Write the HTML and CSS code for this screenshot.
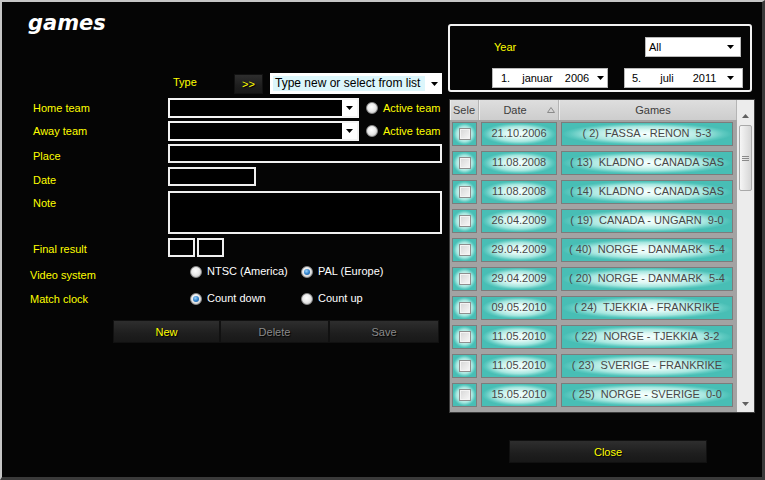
FILE: index.html
```html
<!DOCTYPE html>
<html>
<head>
<meta charset="utf-8">
<link rel="stylesheet" href="styles.css">
</head>
<body>
<div class="win">
  <div class="left">
    <h1 class="title">games</h1>

    <div class="row r-type">
      <span class="lbl lbl-type">Type</span>
      <span class="darkbtn go">&gt;&gt;</span>
      <span class="typecombo"><span class="typetext">Type new or select from list</span><svg class="arr" width="7" height="4" viewBox="0 0 7 4"><path d="M0 0h7L3.5 4z"/></svg></span>
    </div>

    <div class="row r-home">
      <span class="lbl pt4">Home team</span>
      <span class="dcombo"><span class="dfill"></span><span class="darr"><svg width="7" height="4" viewBox="0 0 7 4"><path d="M0 0h7L3.5 4z"/></svg></span></span>
      <span class="radio r-act"></span><span class="ylw">Active team</span>
    </div>

    <div class="row r-away">
      <span class="lbl pt4">Away team</span>
      <span class="dcombo"><span class="dfill"></span><span class="darr"><svg width="7" height="4" viewBox="0 0 7 4"><path d="M0 0h7L3.5 4z"/></svg></span></span>
      <span class="radio r-act"></span><span class="ylw">Active team</span>
    </div>

    <div class="row r-place">
      <span class="lbl pt6">Place</span>
      <span class="tbox w-full h19"></span>
    </div>

    <div class="row r-date">
      <span class="lbl pt7">Date</span>
      <span class="tbox w-date h19"></span>
    </div>

    <div class="row r-note">
      <span class="lbl pt6">Note</span>
      <span class="tbox w-full h43"></span>
    </div>

    <div class="row r-final">
      <span class="lbl pt5">Final result</span>
      <span class="tbox w-res h19"></span>
      <span class="tbox w-res h19 res2"></span>
    </div>

    <div class="row r-video">
      <span class="lbl lbl-wide pt5">Video system</span>
      <span class="ritem first"><span class="radio"></span><span class="wht">NTSC (America)</span></span>
      <span class="ritem"><span class="radio on"></span><span class="wht">PAL (Europe)</span></span>
    </div>

    <div class="row r-match">
      <span class="lbl lbl-wide pt2">Match clock</span>
      <span class="ritem first"><span class="radio on"></span><span class="wht">Count down</span></span>
      <span class="ritem"><span class="radio"></span><span class="wht">Count up</span></span>
    </div>

    <div class="row r-btns">
      <span class="darkbtn bb b-new">New</span>
      <span class="darkbtn bb b-del dis">Delete</span>
      <span class="darkbtn bb b-save dis">Save</span>
    </div>
  </div>

  <div class="right">
    <div class="yearbox">
      <div class="yrow1">
        <span class="ylw yearlbl">Year</span>
        <span class="wcombo allc"><span>All</span><svg width="7" height="4" viewBox="0 0 7 4"><path d="M0 0h7L3.5 4z"/></svg></span>
      </div>
      <div class="yrow2">
        <span class="wcombo dp dp1"><span class="d1">1.</span><span class="d2">januar</span><span class="d3">2006</span><svg width="7" height="4" viewBox="0 0 7 4"><path d="M0 0h7L3.5 4z"/></svg></span>
        <span class="wcombo dp dp2"><span class="d1">5.</span><span class="d2">juli</span><span class="d3">2011</span><svg width="7" height="4" viewBox="0 0 7 4"><path d="M0 0h7L3.5 4z"/></svg></span>
      </div>
    </div>

    <div class="grid">
      <div class="table">
        <div class="ghead">
          <div class="hc h-sel">Sele</div>
          <div class="hc h-date">Date<svg class="sort" width="8" height="6" viewBox="0 0 8 6"><path d="M0.5 5.5h7L4 0.5z" fill="none" stroke="#8a8a8a"/></svg></div>
          <div class="hc h-game">Games</div>
        </div>
        <div class="gbody">
          <div class="grow"><div class="gc"><span class="tb"><span class="chk"></span></span></div><div class="gc"><span class="tb">21.10.2006</span></div><div class="gc gg"><span class="tb">( 2)  FASSA - RENON  5-3</span></div></div>
          <div class="grow"><div class="gc"><span class="tb"><span class="chk"></span></span></div><div class="gc"><span class="tb">11.08.2008</span></div><div class="gc gg"><span class="tb">( 13)  KLADNO - CANADA SAS</span></div></div>
          <div class="grow"><div class="gc"><span class="tb"><span class="chk"></span></span></div><div class="gc"><span class="tb">11.08.2008</span></div><div class="gc gg"><span class="tb">( 14)  KLADNO - CANADA SAS</span></div></div>
          <div class="grow"><div class="gc"><span class="tb"><span class="chk"></span></span></div><div class="gc"><span class="tb">26.04.2009</span></div><div class="gc gg"><span class="tb">( 19)  CANADA - UNGARN  9-0</span></div></div>
          <div class="grow"><div class="gc"><span class="tb"><span class="chk"></span></span></div><div class="gc"><span class="tb">29.04.2009</span></div><div class="gc gg"><span class="tb">( 40)  NORGE - DANMARK  5-4</span></div></div>
          <div class="grow"><div class="gc"><span class="tb"><span class="chk"></span></span></div><div class="gc"><span class="tb">29.04.2009</span></div><div class="gc gg"><span class="tb">( 20)  NORGE - DANMARK  5-4</span></div></div>
          <div class="grow"><div class="gc"><span class="tb"><span class="chk"></span></span></div><div class="gc"><span class="tb">09.05.2010</span></div><div class="gc gg"><span class="tb">( 24)  TJEKKIA - FRANKRIKE</span></div></div>
          <div class="grow"><div class="gc"><span class="tb"><span class="chk"></span></span></div><div class="gc"><span class="tb">11.05.2010</span></div><div class="gc gg"><span class="tb">( 22)  NORGE - TJEKKIA  3-2</span></div></div>
          <div class="grow"><div class="gc"><span class="tb"><span class="chk"></span></span></div><div class="gc"><span class="tb">11.05.2010</span></div><div class="gc gg"><span class="tb">( 23)  SVERIGE - FRANKRIKE</span></div></div>
          <div class="grow"><div class="gc"><span class="tb"><span class="chk"></span></span></div><div class="gc"><span class="tb">15.05.2010</span></div><div class="gc gg"><span class="tb">( 25)  NORGE - SVERIGE  0-0</span></div></div>
          <div class="grow"><div class="gc"><span class="tb"></span></div><div class="gc"><span class="tb"></span></div><div class="gc gg"><span class="tb"></span></div></div>
        </div>
      </div>
      <div class="sb">
        <div class="sb-up"><svg width="7" height="4" viewBox="0 0 7 4"><path d="M0 4h7L3.5 0z" fill="#606060"/></svg></div>
        <div class="thumb"><svg width="7" height="5" viewBox="0 0 7 5"><path d="M0 0.5h7M0 2.5h7M0 4.5h7" stroke="#8a8a8a" stroke-width="1"/></svg></div>
        <div class="sb-space"></div>
        <div class="sb-down"><svg width="7" height="4" viewBox="0 0 7 4"><path d="M0 0h7L3.5 4z" fill="#606060"/></svg></div>
      </div>
    </div>

    <div class="closebar"><span class="darkbtn closebtn">Close</span></div>
  </div>
</div>
</body>
</html>
```
FILE: styles.css
```css
html, body {
  margin: 0;
  padding: 0;
  background: #050505;
  overflow: hidden;
}
body {
  font-family: "Liberation Sans", Arial, sans-serif;
  font-size: 11px;
}
.win {
  width: 765px;
  height: 480px;
  box-sizing: border-box;
  border-left: 2px solid #c6c6c6;
  border-top: 2px solid #c6c6c6;
  border-right: 3px solid #3a3a3a;
  border-bottom: 3px solid #3a3a3a;
  background: #050505;
  display: flex;
}
.left {
  width: 444px;
  display: flex;
  flex-direction: column;
}
.title {
  margin: 0;
  height: 71px;
  box-sizing: border-box;
  padding: 9px 0 0 26px;
  font-family: "DejaVu Sans", Verdana, sans-serif;
  font-weight: bold;
  font-style: italic;
  font-size: 21px;
  line-height: 24px;
  color: #ffffff;
}
.row {
  display: flex;
  align-items: flex-start;
  padding-left: 31px;
}
.lbl {
  width: 135px;
  color: #ffff00;
  line-height: 13px;
  flex: none;
}
.ylw { color: #ffff00; line-height: 13px; }
.wht { color: #ffffff; line-height: 13px; }
.pt2 { padding-top: 2px; }
.pt4 { padding-top: 4px; }
.pt5 { padding-top: 5px; }
.pt6 { padding-top: 6px; }
.pt7 { padding-top: 7px; }

/* type row */
.r-type { height: 21px; padding-left: 171px; }
.lbl-type { width: 61px; padding-top: 3px; }
.darkbtn {
  box-sizing: border-box;
  display: flex;
  align-items: center;
  justify-content: center;
  background: linear-gradient(#2e2e2e, #1e1e1e 60%, #181818);
  border: 1px solid #111;
  color: #ffff00;
  text-shadow: 1px 1px 1px #000;
}
.go { width: 29px; height: 20px; margin-top: 1px; }
.typecombo {
  margin-left: 7px;
  width: 172px;
  height: 21px;
  box-sizing: border-box;
  border: 2px solid #ffffff;
  background: #ffffff;
  display: flex;
  align-items: center;
  padding-left: 1px;
}
.typetext {
  flex: none;
  background: #dcf6fb;
  color: #000;
  font-size: 12px;
  line-height: 15px;
  padding: 0 2px 0 2px;
  width: 148px;
  white-space: nowrap;
  overflow: hidden;
}
.typecombo .arr { margin-left: 6px; flex: none; }

/* dark combos */
.r-home { height: 20px; margin-top: 4px; }
.r-away { height: 20px; margin-top: 3px; }
.dcombo {
  width: 191px;
  height: 20px;
  box-sizing: border-box;
  border: 2px solid #f4f4f4;
  display: flex;
  background: #000;
}
.dfill { flex: 1; background: #000; }
.darr {
  width: 15px;
  background: #ffffff;
  display: flex;
  align-items: center;
  justify-content: center;
}
.radio {
  flex: none;
  box-sizing: border-box;
  width: 12px;
  height: 12px;
  border-radius: 50%;
  border: 1px solid #8b8b8b;
  background: radial-gradient(circle at 45% 40%, #ffffff 0%, #ececec 45%, #bdbdbd 100%);
  display: flex;
  align-items: center;
  justify-content: center;
}
.radio.on::after {
  content: "";
  width: 6px;
  height: 6px;
  border-radius: 50%;
  background: radial-gradient(circle at 40% 35%, #9fd6ff 0%, #2a7cc7 55%, #174f8c 100%);
}
.r-act { margin: 4px 5px 0 7px; }
.r-home .ylw, .r-away .ylw { padding-top: 4px; }

/* text boxes */
.tbox {
  box-sizing: border-box;
  border: 2px solid #f0f0f0;
  background: #000;
  display: block;
}
.w-full { width: 274px; }
.w-date { width: 88px; }
.w-res { width: 27px; }
.res2 { margin-left: 2px; }
.h19 { height: 19px; }
.h43 { height: 43px; }
.r-place { margin-top: 3px; }
.r-date { margin-top: 4px; }
.r-note { margin-top: 4px; }
.r-final { margin-top: 4px; }

/* radio rows */
.r-video { margin-top: 7px; height: 18px; padding-left: 28px; }
.r-match { margin-top: 9px; height: 18px; padding-left: 28px; }
.lbl-wide { width: 160px; }
.ritem { display: flex; align-items: flex-start; padding-top: 2px; }
.ritem .radio { margin-right: 5px; }
.ritem .wht { margin-top: -1px; }
.ritem.first { width: 111px; }
.r-match .ritem { padding-top: 2px; }

/* action buttons */
.r-btns { margin-top: 11px; padding-left: 111px; height: 23px; }
.bb { height: 23px; }
.b-new { width: 107px; }
.b-del { width: 109px; }
.b-save { width: 110px; }
.dis { color: #8a8a8a; }

/* right side */
.right {
  width: 316px;
  display: flex;
  flex-direction: column;
}
.yearbox {
  margin: 22px 0 0 2px;
  width: 304px;
  height: 68px;
  box-sizing: border-box;
  border: 2px solid #f2f2f2;
  border-radius: 3px;
}
.yrow1 {
  display: flex;
  align-items: center;
  height: 20px;
  margin-top: 11px;
}
.yearlbl { margin-left: 44px; }
.wcombo {
  box-sizing: border-box;
  background: #fff;
  border: 1px solid #b9b9b9;
  height: 20px;
  display: flex;
  align-items: center;
  color: #000;
  white-space: nowrap;
}
.allc {
  margin-left: auto;
  margin-right: 9px;
  width: 96px;
  padding: 0 6px 0 3px;
  justify-content: space-between;
}
.yrow2 {
  display: flex;
  margin-top: 11px;
  height: 20px;
}
.dp1 { margin-left: 42px; width: 116px; }
.dp2 { margin-left: 16px; width: 119px; }
.dp .d1 { margin-left: 8px; }
.dp1 .d2 { margin-left: 12px; }
.dp1 .d3 { margin-left: 12px; }
.dp1 svg { margin-left: 8px; }
.dp2 .d1 { margin-left: 7px; }
.dp2 .d2 { margin-left: 19px; }
.dp2 .d3 { margin-left: 19px; }
.dp2 svg { margin-left: 11px; }

/* grid */
.grid {
  margin: 7px 0 0 3px;
  width: 306px;
  height: 314px;
  box-sizing: border-box;
  border: 1px solid #3c3c3c;
  display: flex;
  background: #a3a3a3;
}
.table {
  width: 287px;
  display: flex;
  flex-direction: column;
  overflow: hidden;
}
.ghead {
  height: 20px;
  flex: none;
  display: grid;
  grid-template-columns: 29px 80px 178px;
  background: linear-gradient(#dedede, #cdcdcd);
  color: #3c3c3c;
}
.hc {
  box-sizing: border-box;
  border-right: 1px solid #b4b4b4;
  border-left: 1px solid #ececec;
  display: flex;
  align-items: center;
  line-height: 13px;
  white-space: nowrap;
  overflow: hidden;
}
.h-sel { padding-left: 2px; }
.h-date { justify-content: center; position: relative; padding-right: 8px; }
.sort { position: absolute; right: 3px; top: 7px; }
.h-game { justify-content: center; padding-left: 10px; }
.gbody {
  flex: 1;
  overflow: hidden;
}
.grow {
  height: 29px;
  display: grid;
  grid-template-columns: 29px 80px 178px;
}
.gc {
  box-sizing: border-box;
  padding: 2px 2px 3px 2px;
  display: flex;
}
.gc.gg { padding-right: 4px; }
.tb {
  flex: 1;
  box-sizing: border-box;
  height: 24px;
  padding-bottom: 3px;
  border: 1px solid #7c7c7c;
  background: radial-gradient(ellipse closest-side at 50% 50%, #f6fffe 0%, #def8f4 35%, #a8e7e0 68%, #5dc9c0 90%, #48beb5 100%);
  display: flex;
  align-items: center;
  justify-content: center;
  color: #474747;
  white-space: pre;
  font-size: 11px;
}
.chk {
  box-sizing: border-box;
  width: 12px;
  height: 12px;
  border: 1px solid #8e8e8e;
  background: linear-gradient(135deg, #d6d6d6, #f8f8f8);
  box-shadow: inset 0 0 0 1px #f4f4f4;
  margin-top: 2px;
}
.sb {
  width: 17px;
  background: #ececec;
  display: flex;
  flex-direction: column;
  align-items: center;
}
.sb-up {
  height: 25px;
  box-sizing: border-box;
  padding-top: 14px;
  display: flex;
  justify-content: center;
  align-items: flex-start;
}
.sb-up svg, .sb-down svg { display: block; }
.thumb {
  width: 13px;
  height: 66px;
  box-sizing: border-box;
  border: 1px solid #a9a9a9;
  border-radius: 2px;
  background: linear-gradient(90deg, #f6f6f6, #e6e6e6 50%, #d6d6d6);
  display: flex;
  align-items: center;
  justify-content: center;
}
.sb-space { flex: 1; }
.sb-down {
  height: 17px;
  display: flex;
  align-items: center;
  justify-content: center;
}

.closebar { margin: 27px 0 0 63px; }
.closebtn { width: 198px; height: 23px; }
```
